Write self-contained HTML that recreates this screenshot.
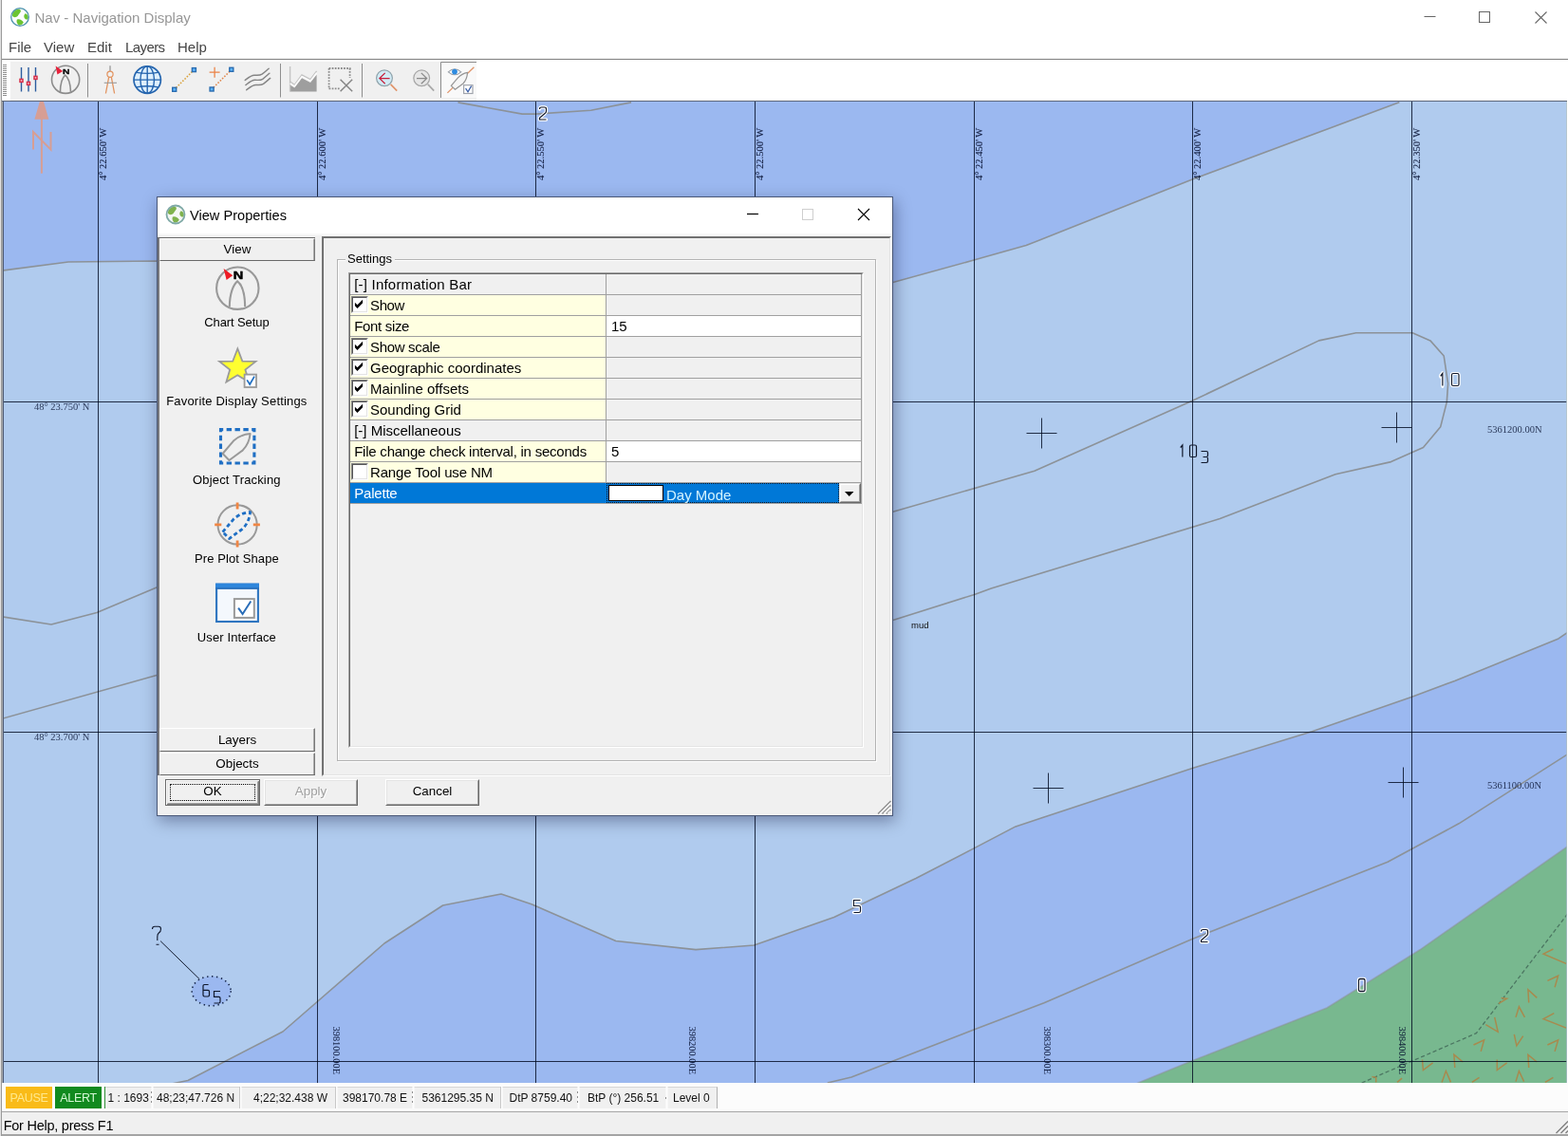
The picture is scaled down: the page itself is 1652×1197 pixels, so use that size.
<!DOCTYPE html>
<html>
<head>
<meta charset="utf-8">
<title>Nav - Navigation Display</title>
<style>
html,body{margin:0;padding:0;}
body{width:1652px;height:1197px;position:relative;overflow:hidden;background:#ffffff;font-family:"Liberation Sans",sans-serif;color:#000;}
.abs{position:absolute;}
.t{position:absolute;white-space:pre;}
/* main window */
#titlebar{left:0;top:0;width:1652px;height:62px;background:#fff;}
#title{left:36.5px;top:8.8px;font-size:15px;line-height:20px;color:#979797;}
.menu{top:39.6px;font-size:15px;line-height:20px;color:#454545;}
#menuline{left:0;top:61px;width:1652px;height:1px;background:#f2f2f2;border-bottom:1px solid #858585;}
#toolbar{left:11px;top:65px;width:491px;height:40.5px;background:#f0f0f0;}
#tbwhite{left:0;top:63px;width:1652px;height:43px;background:#fff;}
.sep{position:absolute;top:67px;width:1px;height:35px;background:#a0a0a0;}
/* status */
#status1{left:0;top:1141px;width:1652px;height:30px;background:#fcfcfc;border-bottom:1px solid #a6a6a6;}
#status1bg{left:111px;top:1145px;width:645px;height:23px;background:#f0f0f0;box-sizing:border-box;border-top:1px solid #d6d6d6;border-right:1px solid #b0b0b0;}
.sp{position:absolute;top:1146px;height:22px;font-size:12px;line-height:22px;color:#111;white-space:pre;text-align:center;}
#status2{left:0;top:1172px;width:1652px;height:25px;background:#f0f0f0;box-sizing:border-box;border-bottom:2px solid #a4a4a4;}
#help{left:3.700px;top:1175.5px;font-size:14.5px;line-height:20px;color:#000;letter-spacing:-0.25px;}
/* dialog */
</style>
</head>
<body>
<div id="root" style="position:absolute;left:0;top:0;width:1652px;height:1197px;will-change:transform">
<!-- TITLE BAR -->
<div class="abs" id="titlebar"></div>
<svg class="abs" style="left:9.8px;top:6.9px;width:22px;height:22px" viewBox="0 0 22 22"><circle cx="11" cy="11" r="9.300" fill="#fdfefe"/><path d="M3 9.500C2.800 5.500 6 2.600 10.200 2.400C12.200 3 12.400 5 11 6.600C9.600 8 9.400 10 7.400 10.800C5.600 11.600 3.600 11 3 9.500Z" fill="#6cc432"/><path d="M16.200 7.600C18 6.800 19.800 9 19.800 11.200C19.800 12.800 18.800 14 17.400 13.400C15.800 12.600 15 11 15.400 9.200Z" fill="#6cc432"/><path d="M7.800 13.800C10 12.600 13.400 14 14.800 16.600C14 18.800 12 20 9.600 19.600C8 18.200 7 15.800 7.800 13.800Z" fill="#6cc432"/><circle cx="11" cy="11" r="9.300" fill="none" stroke="#4d93ad" stroke-width="1.300"/></svg>
<div class="t" id="title">Nav - Navigation Display</div>
<svg class="abs" style="left:1490px;top:0;width:162px;height:40px" viewBox="0 0 162 40">
<path d="M10.5 17.5H22.5" stroke="#666" stroke-width="1" fill="none"/>
<rect x="68.5" y="12.5" width="11" height="11" stroke="#666" stroke-width="1" fill="none"/>
<path d="M127.5 12.5L139.5 24.5M139.5 12.5L127.5 24.5" stroke="#666" stroke-width="1.1" fill="none"/>
</svg>
<!-- MENU -->
<div class="t menu" style="left:9px">File</div>
<div class="t menu" style="left:46px">View</div>
<div class="t menu" style="left:92px">Edit</div>
<div class="t menu" style="left:132px;letter-spacing:-0.6px">Layers</div>
<div class="t menu" style="left:187px">Help</div>
<div class="abs" id="menuline"></div>
<!-- TOOLBAR -->
<div class="abs" id="tbwhite"></div>
<div class="abs" id="toolbar"></div>
<svg class="abs" style="left:0;top:62px;width:510px;height:45px" viewBox="0 62 510 45">
<!-- gripper -->
<path d="M3 68.5H7M3 70.5H7M3 72.5H7M3 74.5H7M3 76.5H7M3 78.5H7M3 80.5H7M3 82.5H7M3 84.5H7M3 86.5H7M3 88.5H7M3 90.5H7M3 92.5H7M3 94.5H7M3 96.5H7M3 98.5H7M3 100.5H7" stroke="#8e8e8e" stroke-width="1" fill="none"/>
<!-- 1 sliders -->
<path d="M22.5 71V96.6M30 71V96.6M37.5 71V96.6" stroke="#2b5c9e" stroke-width="1.400" fill="none"/>
<g fill="#fbd0d8" stroke="#d6304a" stroke-width="1.500"><rect x="21" y="83.400" width="3" height="3"/><rect x="28.500" y="86.400" width="3" height="3"/><rect x="36" y="80.400" width="3" height="3"/></g>
<!-- 2 compass -->
<circle cx="69.1" cy="83.8" r="14.6" fill="none" stroke="#8c8c8c" stroke-width="1.6"/>
<path d="M63.4 97.2C63.6 88 66 81.5 68.7 79.2C71.6 81.5 74.2 88 74.5 96.8" fill="none" stroke="#8c8c8c" stroke-width="1.6"/>
<path d="M58.6 69.6L66.2 74.9L60.4 78.5Z" fill="#e8203a"/>
<text transform="translate(66.1,78.1) scale(1.3,1)" font-family="Liberation Sans,sans-serif" font-weight="bold" font-size="7.900" fill="#000" stroke="#000" stroke-width="0.3">N</text>
<!-- sep -->
<path d="M92.5 67V102.5M295.5 67V102.5M381.5 67V102.5" stroke="#8e8e8e" stroke-width="1" fill="none"/>
<!-- 3 dividers -->
<path d="M116 69.200V75" stroke="#8f8f8f" stroke-width="1.200" fill="none"/>
<circle cx="116" cy="78.300" r="3.100" fill="none" stroke="#e2935f" stroke-width="1.200"/>
<path d="M114.700 81.200L111.400 98.500M117.300 81.200L120.600 98.500" fill="none" stroke="#e2935f" stroke-width="1.300"/>
<path d="M109.700 87.300H123" stroke="#9a9a9a" stroke-width="1.100" fill="none"/>
<!-- 4 globe -->
<circle cx="155.2" cy="84.1" r="14.2" fill="#def0ff" stroke="#2565ae" stroke-width="1.700"/>
<path d="M155.2 70V98.2M141 84.1H169.4" stroke="#2565ae" stroke-width="1.400" fill="none"/>
<ellipse cx="155.2" cy="84.1" rx="7.3" ry="14.2" fill="none" stroke="#2565ae" stroke-width="1.400"/>
<path d="M143.8 76.3Q155.2 78.6 166.6 76.3M143.8 91.9Q155.2 89.6 166.6 91.9" stroke="#2565ae" stroke-width="1.300" fill="none"/>
<!-- 5 line -->
<path d="M185.5 92.5L202.6 75.4" stroke="#d9a441" stroke-width="1.6" stroke-dasharray="1.6 1.6" fill="none"/>
<g fill="#5eb6ff" stroke="#2a6cb0" stroke-width="1.400"><rect x="181.700" y="92.300" width="4" height="4"/><rect x="202.400" y="71.600" width="4" height="4"/></g>
<!-- 6 plus line -->
<path d="M225 92.2L242 75.2" stroke="#e08a50" stroke-width="1.6" stroke-dasharray="1.6 1.6" fill="none"/>
<g fill="#5eb6ff" stroke="#2a6cb0" stroke-width="1.400"><rect x="221.100" y="92" width="4" height="4"/><rect x="241.800" y="71.300" width="4" height="4"/></g>
<path d="M220.6 76.2H231.6M226.1 70.7V81.7" stroke="#ea8246" stroke-width="1.250" fill="none"/>
<!-- 7 waves -->
<g fill="none" stroke="#858585" stroke-width="1.450" stroke-linecap="round" stroke-linejoin="round"><path d="M258.2 84.5C262 81.5 264.5 79.2 268 79.2C271 79.2 273.5 79.8 276 78.2C279 76 281 74 283.2 72.2"/><path d="M258.9 89.6C262.7 86.6 265.2 84.3 268.7 84.3C271.7 84.3 274.2 84.9 276.7 83.3C279.7 81.1 281.7 79.1 283.9 77.3"/><path d="M259.7 94.7C263.5 91.7 266 89.4 269.5 89.4C272.5 89.4 275 90 277.5 88.4C280.5 86.2 282.5 84.2 284.7 82.4"/></g>
<!-- 8 area chart -->
<path d="M305.6 89.6L310.3 92.5L318 82.3L327 87.1L333.6 78.7V96.5H305.6Z" fill="#9e9e9e"/>
<path d="M305.6 70V96.5" stroke="#c4c4c4" stroke-width="1.4" fill="none"/>
<path d="M305.6 86L310.3 89.4L318 79L327 83.7L333.6 74.8" stroke="#c4c4c4" stroke-width="1.4" fill="none"/>
<path d="M305.6 87.8L310.3 91L318 80.7L327 85.4L333.6 76.8" stroke="#fbfbfb" stroke-width="1.5" fill="none"/>
<!-- 9 dotted rect + X -->
<path d="M346.6 72H369.4" stroke="#8a8a8a" stroke-width="1.8" stroke-dasharray="1.7 1.4" fill="none"/>
<path d="M346.6 72V94" stroke="#8a8a8a" stroke-width="1.8" stroke-dasharray="1.7 1.4" fill="none"/>
<path d="M346.6 93.4H358" stroke="#8a8a8a" stroke-width="1.8" stroke-dasharray="1.7 1.4" fill="none"/>
<path d="M368.6 72V82" stroke="#8a8a8a" stroke-width="1.8" stroke-dasharray="1.7 1.4" fill="none"/>
<path d="M358.6 83.8L371.2 96.2M371.2 83.8L358.6 96.2" stroke="#858585" stroke-width="1.5" fill="none"/>
<!-- 10 zoom prev -->
<path d="M411.6 88.9L418.2 95.6" stroke="#e0956a" stroke-width="1.7" fill="none"/>
<circle cx="405" cy="82.3" r="8.4" fill="#d2ebf5" stroke="#8fa3ab" stroke-width="1.200"/>
<path d="M400.3 82.6H410.6M405.7 76.9L399.9 82.6L405.7 88.2" stroke="#c8203c" stroke-width="1.300" fill="none"/>
<!-- 11 zoom next -->
<path d="M450.8 88.9L457.2 95.6" stroke="#a8a8a8" stroke-width="1.7" fill="none"/>
<circle cx="444.2" cy="82.3" r="8.4" fill="#e6e6e6" stroke="#a6a6a6" stroke-width="1.200"/>
<path d="M439 82.6H449.3M443.8 76.9L449.6 82.6L443.8 88.2" stroke="#8a8a8a" stroke-width="1.300" fill="none"/>
<!-- 12 checked button -->
<rect x="464.5" y="65.5" width="37.5" height="37.5" fill="#f9f9f9"/>
<path d="M464.5 103V65.5H502" stroke="#8c8c8c" stroke-width="1" fill="none"/>
<path d="M471.4 97.9L499.4 70.7" stroke="#e0956a" stroke-width="1.3" fill="none"/>
<path d="M475.3 90.400L482.300 82.200Q486.700 77.400 492.500 76.300Q492.200 83.500 488 88L479.500 94.300Z" fill="#f6f6f6" stroke="#969696" stroke-width="1.250" stroke-linejoin="round"/>
<path d="M472.3 75.8Q479 69.8 485.8 75.8Q479 81.8 472.3 75.8Z" fill="#fdfdfd" stroke="#9aa0a8" stroke-width="1.1"/>
<circle cx="479" cy="75.6" r="2.9" fill="#2e8be0"/>
<rect x="488.6" y="89.7" width="9.4" height="8.8" fill="#fff" stroke="#a0a4ac" stroke-width="1.2"/>
<path d="M490.6 93.2L493 96.8L496.6 90.6" stroke="#3a5fa8" stroke-width="1.250" fill="none"/>
</svg>

<!-- MAP -->
<svg class="abs" style="left:0;top:0;width:1652px;height:1197px" viewBox="0 0 1652 1197">
<defs><clipPath id="mc"><rect x="3" y="107" width="1647.5" height="34.5"/></clipPath>
<clipPath id="mapclip"><rect x="4" y="107" width="1646.5" height="1034"/></clipPath>
<path id="d0" d="M1.5 0H5.5Q7 0 7 1.5V11.5Q7 13 5.5 13H1.5Q0 13 0 11.5V1.5Q0 0 1.5 0Z"/>
<path id="d1" d="M1 2.8L4 0V13"/>
<path id="d2" d="M0 2Q0 0 2 0H5Q7 0 7 2V4Q7 5.6 5.6 6.6L0 11.2V13H7"/>
<path id="d3" d="M0 0H5.5Q7 0 7 1.5V5Q7 6.5 5.5 6.5H2M5.5 6.5Q7 6.5 7 8V11.5Q7 13 5.5 13H0"/>
<path id="d5" d="M7 0H0V6H5.5Q7 6 7 7.5V11.5Q7 13 5.5 13H0"/>
<path id="d6" d="M6 0H1.5Q0 0 0 1.5V11.5Q0 13 1.5 13H5.5Q7 13 7 11.5V7.5Q7 6 5.5 6H0"/>
</defs>
<rect x="2" y="106" width="1649" height="1035" fill="#ffffff"/>
<g clip-path="url(#mapclip)">
<rect x="3" y="107" width="1648" height="1035" fill="#b0cbee"/>
<polygon points="3,107 3,285 72,276 165,275 940,297.7 1026.9,273.8 1081.2,258.6 1256.2,189 1474.3,107.8 1474.3,107" fill="#9bb8f0"/>
<polygon points="182,1141.7 198,1138.5 298,1087 405,994 466.6,954 528,942 560,952.8 648.8,991.5 733,1000.6 794.4,996 878.7,966.5 965,925.5 1026.6,893.6 1070,870.9 1100,861 1256.2,809.5 1382.4,770.8 1487,734.4 1532.7,717.5 1642,672.9 1652,666 1652,1142 182,1142" fill="#9bb8f0"/>
<polygon points="1198,1141.5 1256,1117.8 1398,1062 1496,1000.8 1652,891.5 1652,1142 1198,1142" fill="#78b88f"/>
<polyline points="3,285 72,276 165,275 940,297.7 1026.9,273.8 1081.2,258.6 1256.2,189 1474.3,107.8" fill="none" stroke="#8c9298" stroke-width="1.6" stroke-linejoin="round" />
<polyline points="182,1141.7 198,1138.5 298,1087 405,994 466.6,954 528,942 560,952.8 648.8,991.5 733,1000.6 794.4,996 878.7,966.5 965,925.5 1026.6,893.6 1070,870.9 1100,861 1256.2,809.5 1382.4,770.8 1487,734.4 1532.7,717.5 1642,672.9 1652,666" fill="none" stroke="#8c9298" stroke-width="1.6" stroke-linejoin="round" />
<polyline points="1198,1141.5 1256,1117.8 1398,1062 1496,1000.8 1652,891.5" fill="none" stroke="#8c9298" stroke-width="1.6" stroke-linejoin="round" stroke-opacity="0.55"/>
<polyline points="482.5,107.9 550.2,120.1 564.3,120.1 622.6,116.2 665,107.9" fill="none" stroke="#8c9298" stroke-width="1.6" stroke-linejoin="round" />
<polyline points="3,650 54,658 102,645.5 165,619 940,539.6 1089.9,496.2 1256.2,422.3 1389.6,358.9 1428.7,350.7 1488.2,350.7 1506.9,358.9 1521.2,375 1525.6,404.1 1524.3,423.6 1517.7,449.7 1499.5,471.4 1465.6,486.6 1407,499.7 1285.3,546.6 1044.3,620 1026.6,626.4 940,653.7 165,711.5 3,757" fill="none" stroke="#8c9298" stroke-width="1.6" stroke-linejoin="round" />
<polyline points="871.8,1141 897,1135 1026.6,1084.8 1100,1056.8 1256,989.4 1462,908.3 1537,867.8 1652,794.5" fill="none" stroke="#8c9298" stroke-width="1.6" stroke-linejoin="round" />
<polyline points="1434.7,1141 1555.4,1088.7 1648.8,966.6 1652,962" fill="none" stroke="#4c7762" stroke-width="1.300" stroke-dasharray="4.200 2.600"/>
<polyline points="1636.4,1000.0 1626.1,1005.1 1650.1,1015.4" fill="none" stroke="#a88a4e" stroke-width="1.500"/>
<polyline points="1630.4,1033.4 1641.6,1028.2 1638.1,1040.2" fill="none" stroke="#a88a4e" stroke-width="1.500"/>
<polyline points="1610.7,1056.5 1609.9,1042.8 1619.3,1051.4" fill="none" stroke="#a88a4e" stroke-width="1.500"/>
<polyline points="1597.0,1071.9 1600.4,1060.8 1606.4,1071.9" fill="none" stroke="#a88a4e" stroke-width="1.500"/>
<polyline points="1637.3,1067.6 1626.1,1073.6 1650.1,1083.1" fill="none" stroke="#a88a4e" stroke-width="1.500"/>
<polyline points="1565.3,1079.6 1578.2,1087.3 1574.7,1071.9" fill="none" stroke="#a88a4e" stroke-width="1.500"/>
<polyline points="1595.3,1089.9 1597.9,1101.9 1604.7,1091.6" fill="none" stroke="#a88a4e" stroke-width="1.500"/>
<polyline points="1552.5,1101.0 1563.6,1095.9 1560.2,1107.9" fill="none" stroke="#a88a4e" stroke-width="1.500"/>
<polyline points="1630.4,1101.0 1641.6,1095.9 1638.1,1107.9" fill="none" stroke="#a88a4e" stroke-width="1.500"/>
<polyline points="1532.8,1125.0 1531.9,1111.3 1541.3,1119.0" fill="none" stroke="#a88a4e" stroke-width="1.500"/>
<polyline points="1498.5,1116.5 1499.4,1127.6 1509.6,1119.9" fill="none" stroke="#a88a4e" stroke-width="1.500"/>
<polyline points="1577.3,1116.5 1577.3,1127.6 1587.6,1119.9" fill="none" stroke="#a88a4e" stroke-width="1.500"/>
<polyline points="1610.7,1125.0 1609.9,1111.3 1619.3,1119.0" fill="none" stroke="#a88a4e" stroke-width="1.500"/>
<polyline points="1519.1,1140.4 1523.4,1128.5 1528.5,1140.4" fill="none" stroke="#a88a4e" stroke-width="1.500"/>
<polyline points="1597.0,1139.6 1600.4,1128.5 1605.6,1139.6" fill="none" stroke="#a88a4e" stroke-width="1.500"/>
<polyline points="1550.8,1140.4 1558.5,1135.3" fill="none" stroke="#a88a4e" stroke-width="1.500"/>
<polyline points="1627.9,1140.4 1636.4,1135.3" fill="none" stroke="#a88a4e" stroke-width="1.500"/>
<polyline points="1445.4,1134.4 1449.7,1135.3 1449.7,1140.4" fill="none" stroke="#a88a4e" stroke-width="1.500"/>
<polyline points="1472.0,1140.4 1477.1,1136.2" fill="none" stroke="#a88a4e" stroke-width="1.500"/>
<polyline points="1579.0,1057.4 1587.6,1052.2 1581.6,1051.4" fill="none" stroke="#a88a4e" stroke-width="1.500"/>
<line x1="103.5" y1="107" x2="103.5" y2="1142" stroke="rgba(0,10,32,0.82)" stroke-width="1"/>
<line x1="334.5" y1="107" x2="334.5" y2="1142" stroke="rgba(0,10,32,0.82)" stroke-width="1"/>
<line x1="564.5" y1="107" x2="564.5" y2="1142" stroke="rgba(0,10,32,0.82)" stroke-width="1"/>
<line x1="795.5" y1="107" x2="795.5" y2="1142" stroke="rgba(0,10,32,0.82)" stroke-width="1"/>
<line x1="1026.5" y1="107" x2="1026.5" y2="1142" stroke="rgba(0,10,32,0.82)" stroke-width="1"/>
<line x1="1256.5" y1="107" x2="1256.5" y2="1142" stroke="rgba(0,10,32,0.82)" stroke-width="1"/>
<line x1="1487.5" y1="107" x2="1487.5" y2="1142" stroke="rgba(0,10,32,0.82)" stroke-width="1"/>
<line x1="3" y1="423.5" x2="1651" y2="423.5" stroke="rgba(0,10,32,0.82)" stroke-width="1"/>
<line x1="3" y1="771.5" x2="1651" y2="771.5" stroke="rgba(0,10,32,0.82)" stroke-width="1"/>
<line x1="3" y1="1118.5" x2="1651" y2="1118.5" stroke="rgba(0,10,32,0.82)" stroke-width="1"/>
<path d="M1081.5 456.5H1113.5M1097.5 440.5V472.5" stroke="rgba(0,10,32,0.82)" stroke-width="1" fill="none"/>
<path d="M1455.5 450.5H1487.5M1471.5 434.5V466.5" stroke="rgba(0,10,32,0.82)" stroke-width="1" fill="none"/>
<path d="M1088.5 830.5H1120.5M1104.5 814.5V846.5" stroke="rgba(0,10,32,0.82)" stroke-width="1" fill="none"/>
<path d="M1462.5 824.5H1494.5M1478.5 808.5V840.5" stroke="rgba(0,10,32,0.82)" stroke-width="1" fill="none"/>
<g font-family="Liberation Serif, serif" font-size="10.5" fill="rgba(0,12,44,0.86)" stroke="rgba(0,12,44,0.86)" stroke-width="0.1">
<text transform="translate(112.0,190) rotate(-90)">4° 22.650' W</text>
<text transform="translate(343.0,190) rotate(-90)">4° 22.600' W</text>
<text transform="translate(573.0,190) rotate(-90)">4° 22.550' W</text>
<text transform="translate(804.0,190) rotate(-90)">4° 22.500' W</text>
<text transform="translate(1035.0,190) rotate(-90)">4° 22.450' W</text>
<text transform="translate(1265.0,190) rotate(-90)">4° 22.400' W</text>
<text transform="translate(1496.0,190) rotate(-90)">4° 22.350' W</text>
</g>
<g font-family="Liberation Serif, serif" font-size="10.4" fill="rgba(0,12,44,0.86)" stroke="rgba(0,12,44,0.86)" stroke-width="0.05">
<text transform="translate(351.2,1081.5) rotate(90)">398100.00E</text>
<text transform="translate(726.2,1081.5) rotate(90)">398200.00E</text>
<text transform="translate(1100.2,1081.5) rotate(90)">398300.00E</text>
<text transform="translate(1474.2,1081.5) rotate(90)">398400.00E</text>
</g>
<g font-family="Liberation Serif, serif" font-size="10.5" fill="rgba(0,12,44,0.78)">
<text x="36" y="432">48° 23.750' N</text>
<text x="36" y="780">48° 23.700' N</text>
<text x="1567" y="456">5361200.00N</text>
<text x="1567" y="831">5361100.00N</text>
</g>
<text x="960" y="661.5" font-family="Liberation Sans,sans-serif" font-size="9.5" fill="#111">mud</text>
<use href="#d2" transform="translate(568.5,113) scale(1.0,1.0)" fill="none" stroke="#fff" stroke-width="3.4" stroke-linejoin="round" stroke-linecap="round"/><use href="#d2" transform="translate(568.5,113) scale(1.0,1.0)" fill="none" stroke="#10182c" stroke-width="1.2"/>
<use href="#d1" transform="translate(1517,393.5) scale(0.7142857142857143,1.0)" fill="none" stroke="#fff" stroke-width="4.76" stroke-linejoin="round" stroke-linecap="round"/><use href="#d1" transform="translate(1517,393.5) scale(0.7142857142857143,1.0)" fill="none" stroke="#10182c" stroke-width="1.68"/>
<use href="#d0" transform="translate(1529.5,393.5) scale(1.0714285714285714,1.0)" fill="none" stroke="#fff" stroke-width="3.1733333333333333" stroke-linejoin="round" stroke-linecap="round"/><use href="#d0" transform="translate(1529.5,393.5) scale(1.0714285714285714,1.0)" fill="none" stroke="#10182c" stroke-width="1.1199999999999999"/>
<use href="#d5" transform="translate(899.5,948.5) scale(1.0,1.0)" fill="none" stroke="#fff" stroke-width="3.4" stroke-linejoin="round" stroke-linecap="round"/><use href="#d5" transform="translate(899.5,948.5) scale(1.0,1.0)" fill="none" stroke="#10182c" stroke-width="1.2"/>
<use href="#d2" transform="translate(1265.5,979.5) scale(1.0,1.0)" fill="none" stroke="#fff" stroke-width="3.4" stroke-linejoin="round" stroke-linecap="round"/><use href="#d2" transform="translate(1265.5,979.5) scale(1.0,1.0)" fill="none" stroke="#10182c" stroke-width="1.2"/>
<use href="#d0" transform="translate(1431.5,1031.5) scale(0.9285714285714286,1.0)" fill="none" stroke="#fff" stroke-width="3.6615384615384614" stroke-linejoin="round" stroke-linecap="round"/><use href="#d0" transform="translate(1431.5,1031.5) scale(0.9285714285714286,1.0)" fill="none" stroke="#10182c" stroke-width="1.2923076923076922"/>
<use href="#d1" transform="translate(1243,469) scale(0.7142857142857143,0.9615384615384616)" fill="none" stroke="#10182c" stroke-width="1.68"/>
<use href="#d0" transform="translate(1253.5,469) scale(1.0,0.9615384615384616)" fill="none" stroke="#10182c" stroke-width="1.2"/>
<use href="#d3" transform="translate(1265.5,475.5) scale(1.0,0.9230769230769231)" fill="none" stroke="#10182c" stroke-width="1.2"/>
<ellipse cx="222.7" cy="1044.3" rx="20.5" ry="15.5" fill="#9bb8f0" stroke="#16264a" stroke-width="1.6" stroke-dasharray="1.4 3.6"/>
<use href="#d6" transform="translate(214,1037.5) scale(0.9285714285714286,0.9615384615384616)" fill="none" stroke="#10182c" stroke-width="1.2923076923076922"/>
<use href="#d5" transform="translate(225.5,1044.5) scale(0.9285714285714286,0.9615384615384616)" fill="none" stroke="#10182c" stroke-width="1.2923076923076922"/>
<path d="M169.1 991.6L210.2 1031.7" stroke="#10182c" stroke-width="1" fill="none"/>
<path d="M160.5 979Q160.5 976.3 163 976.3H167Q169.5 976.3 169.5 979Q169.5 981.5 167.3 983Q165.8 984.2 165.8 987V991M164.5 995.3H167.5" stroke="#10182c" stroke-width="1.1" fill="none"/>
<g opacity="0.85"><path d="M43.9 100L36.4 125.7H51.4Z" fill="#e29a84"/><path d="M43.9 120V182.7" stroke="#e29a84" stroke-width="2" fill="none"/><path d="M35 157.6V139L53.5 157.6V139" stroke="#e29a84" stroke-width="2" fill="none"/></g>
</g>
<rect x="2" y="106" width="1649" height="1" fill="#5d6679"/><rect x="2" y="107" width="1" height="1034" fill="#a4a8ac"/><rect x="3" y="107" width="1" height="1034" fill="#4e5a74"/><rect x="1650" y="107" width="1" height="1034" fill="#9fb0b4" fill-opacity="0.6"/>
</svg>
<!-- STATUS -->
<div class="abs" id="status1"></div>
<div class="abs" id="status1bg"></div>
<div class="abs" style="left:6px;top:1145px;width:49px;height:23px;background:#f9bb18"></div>
<div class="sp" style="left:6px;width:49px;color:#ffe88c;top:1146px;line-height:23px;font-size:12.5px;letter-spacing:-0.3px">PAUSE</div>
<div class="abs" style="left:58px;top:1145px;width:49px;height:23px;background:#118a1f"></div>
<div class="sp" style="left:58px;width:49px;color:#d4f8d4;top:1146px;line-height:23px;font-size:12.5px;letter-spacing:-0.3px">ALERT</div>
<div class="abs" style="left:110px;top:1145px;width:1px;height:23px;background:#2f8f35"></div>
<div class="sp" style="left:113.5px">1 : 1693</div>
<div class="sp" style="left:165px">48;23;47.726 N</div>
<div class="sp" style="left:267px">4;22;32.438 W</div>
<div class="sp" style="left:361px">398170.78 E</div>
<div class="sp" style="left:444.5px">5361295.35 N</div>
<div class="sp" style="left:536.5px">DtP 8759.40</div>
<div class="sp" style="left:619px">BtP (°) 256.51</div>
<div class="sp" style="left:709px">Level 0</div>
<svg class="abs" style="left:0;top:1141px;width:760px;height:31px" viewBox="0 1141 760 31">
<path d="M160.5 1145V1168M253.5 1145V1168M354.5 1145V1168M435.5 1145V1168M528.5 1145V1168M609.5 1145V1168M702.5 1145V1168" stroke="#fdfdfd" stroke-width="2" fill="none"/>
<path d="M159.5 1150V1152M159.5 1155V1157M159.5 1160V1162M434.5 1150V1152M434.5 1155V1157M434.5 1160V1162M608.5 1150V1152M608.5 1155V1157M608.5 1160V1162M701.5 1156V1158" stroke="#909090" stroke-width="1" fill="none"/>
<path d="M252.5 1145V1168M353.5 1145V1168M527.5 1145V1168" stroke="#c8c8c8" stroke-width="1" fill="none"/>
</svg>

<div class="abs" id="status2"></div>
<div class="t" id="help">For Help, press F1</div>
<div class="abs" id="wborder" style="left:0;top:0;width:1px;height:1197px;background:#e2e2e2;border-right:1px solid #9a9a9a"></div>
<svg class="abs" style="left:1636px;top:1178px;width:16px;height:17px" viewBox="0 0 16 17"><path d="M3.500 16L16 3.500M8.500 16L16 8.500M13.500 16L16 13.500" stroke="#7e7e7e" stroke-width="1.300" fill="none"/></svg>
<!-- DIALOG -->
<style>
#dlg{left:165px;top:207px;width:776px;height:653px;background:#f0f0f0;border:1px solid #4a5878;box-sizing:border-box;box-shadow:2px 5px 16px 0 rgba(0,0,40,.36);}
#dlg .t{position:absolute;white-space:pre;}
#dtitlebar{left:0;top:0;width:774px;height:38px;background:#fff;border-bottom:2px solid #f8f8f8;}
#dtitle{left:34px;top:8.6px;font-size:14.6px;line-height:20px;color:#000;}
#lpanel{left:0;top:42px;width:166px;height:567px;box-sizing:border-box;border-top:1px solid #696969;border-left:2px solid #77777c;}
.obtn{position:absolute;left:2px;width:164px;height:24px;box-sizing:border-box;background:#f0f0f0;border:1px solid;border-color:#fff #7a7a7a #696969 #fff;box-shadow:inset -1px 0 0 #a8a8a8;font-size:13.4px;line-height:22px;text-align:center;color:#000;}
.olbl{position:absolute;left:0.4px;width:166px;text-align:center;font-size:13px;line-height:16px;color:#000;white-space:pre;}
#rpanel{left:173px;top:41px;width:600px;height:569px;box-sizing:border-box;border:1px solid;border-color:#7a7a7a #fff #fff #7a7a7a;}
#rpanel2{left:174px;top:42px;width:598px;height:567px;box-sizing:border-box;border:1px solid;border-color:#696969 #e3e3e3 #e3e3e3 #696969;}
#gbox{left:189px;top:65px;width:568px;height:529px;box-sizing:border-box;border:1px solid #b4b4b4;box-shadow:1px 1px 0 #fff, inset 1px 1px 0 #fff;}
#gboxlbl{left:198px;top:56.500px;padding:0 3px 0 2px;background:#f0f0f0;font-size:13px;line-height:16px;}
#grid{left:201px;top:79px;width:543px;height:501px;box-sizing:border-box;background:#f0f0f0;border:1px solid;border-color:#a0a0a0 #fff #fff #a0a0a0;}
#grid2{left:202px;top:80px;width:541px;height:499px;box-sizing:border-box;border:1px solid;border-color:#696969 #e3e3e3 #e3e3e3 #696969;}
.row{position:absolute;left:203px;width:539px;height:22px;box-sizing:border-box;border-bottom:1px solid #a0a0a0;border-right:1px solid #a0a0a0;}
.row .l{position:absolute;left:0;top:0;width:269px;height:21px;border-right:1px solid #a0a0a0;background:#ffffe1;font-size:15px;line-height:21px;white-space:pre;overflow:hidden;}
.row .r{position:absolute;left:270px;top:0;width:268px;height:21px;background:#f0f0f0;font-size:15px;line-height:21px;white-space:pre;}
.row.hdr .l{background:#f0f0f0;}
.row .l span.tx{position:absolute;left:4.2px;top:0;}
.row .l span.tc{position:absolute;left:21px;top:0;}
.row .r span.tx{position:absolute;left:5px;top:0;}
.row .r.w{background:#fff;}
.cb{position:absolute;left:1px;top:1px;width:18px;height:18px;box-sizing:border-box;background:#fff;border:1px solid;border-color:#808080 #fff #fff #808080;}
.cb i{position:absolute;left:0;top:0;width:16px;height:16px;box-sizing:border-box;border:1px solid;border-color:#5a5a5a #e3e3e3 #e3e3e3 #5a5a5a;}
.cb svg{position:absolute;left:0;top:0;width:16px;height:16px;}
.btn{position:absolute;top:613px;height:28px;width:99px;box-sizing:border-box;background:#f0f0f0;border:1px solid;border-color:#fff #696969 #696969 #fff;font-size:13.4px;line-height:24px;text-align:center;color:#000;}
.btn i{position:absolute;left:0;top:0;right:0;bottom:0;border:1px solid;border-color:#e3e3e3 #a0a0a0 #a0a0a0 #e3e3e3;}
</style>
<div class="abs" id="dlg">
<div class="abs" id="dtitlebar"></div>
<svg class="abs" style="left:8px;top:6.9px;width:22px;height:22px" viewBox="0 0 22 22"><circle cx="11" cy="11" r="9.500" fill="#f4f7f5"/><path d="M3 9.500C2.800 5.500 6 2.600 10.200 2.400C12.200 3 12.400 5 11 6.600C9.600 8 9.400 10 7.400 10.800C5.600 11.600 3.600 11 3 9.500Z" fill="#7fb24e"/><path d="M16.200 7.600C18 6.800 19.800 9 19.800 11.200C19.800 12.800 18.800 14 17.400 13.400C15.800 12.600 15 11 15.400 9.200Z" fill="#7fb24e"/><path d="M7.800 13.800C10 12.600 13.400 14 14.800 16.600C14 18.800 12 20 9.600 19.600C8 18.200 7 15.800 7.800 13.800Z" fill="#7fb24e"/><circle cx="11" cy="11" r="9.500" fill="none" stroke="#7fa9a6" stroke-width="1.800"/></svg>
<div class="t" id="dtitle">View Properties</div>
<svg class="abs" style="left:610px;top:0;width:160px;height:40px" viewBox="0 0 160 40">
<path d="M11 17.500H23" stroke="#000" stroke-width="1.2" fill="none"/>
<rect x="69.5" y="12.5" width="11" height="11" stroke="#cfcfcf" stroke-width="1" fill="none"/>
<path d="M128 12L140 24M140 12L128 24" stroke="#000" stroke-width="1.1" fill="none"/>
</svg>
<!-- left outlook bar -->
<div class="abs" id="lpanel"></div>
<div class="obtn" style="top:43px">View</div>
<div class="obtn" style="top:559px;height:25px;line-height:24px">Layers</div>
<div class="obtn" style="top:585px">Objects</div>
<svg class="abs" style="left:0;top:60px;width:170px;height:400px" viewBox="166 268 170 400">
<circle cx="250.3" cy="303.7" r="22.2" fill="none" stroke="#999" stroke-width="2.1"/>
<path d="M241.8 323.4C242 309 246 299.6 250.1 296.4C254.4 299.6 258 309 258.2 323.2" fill="none" stroke="#999" stroke-width="2.1"/>
<path d="M235.6 283L245.2 290.2L238.6 295Z" fill="#ee1c25"/>
<text transform="translate(245.7,294.4) scale(1.28,1)" font-family="Liberation Sans,sans-serif" font-weight="bold" font-size="11.4" fill="#000" stroke="#000" stroke-width="0.45">N</text>
<path d="M250.3 367.400L255.4 380.7L269.4 380.9L258.4 389.6L262.6 403L250.3 395.2L238.4 402.6L242.2 389.6L231.2 380.9L245.2 380.7Z" fill="#ffff30" stroke="#9a9a9a" stroke-width="1.8" stroke-linejoin="miter"/>
<rect x="257.6" y="394.6" width="12.4" height="13.4" fill="#fff" stroke="#9a9a9a" stroke-width="1.8"/>
<path d="M260.2 400.4L263.200 405L268 396.6" stroke="#1e6ec2" stroke-width="1.7" fill="none"/>
<rect x="232.5" y="452.600" width="35.4" height="35.4" fill="none" stroke="#1f6fc4" stroke-width="3.1" stroke-dasharray="5.4 3.45" stroke-dashoffset="2.7"/>
<path d="M234.6 478L246 464.6Q253.200 457.800 263.600 457Q262.600 467.600 255.600 474.600L241.500 485Z" fill="none" stroke="#999" stroke-width="2" stroke-linejoin="round"/>
<circle cx="250.1" cy="552.9" r="20.6" fill="none" stroke="#999" stroke-width="2"/>
<path d="M250.1 529.5V536.5M250.1 569.6V576.6M226.200 552.900H233.300M266.800 552.900H273.900" stroke="#f08644" stroke-width="2.800" fill="none"/>
<path d="M234.6 560.6L246 547.2Q253.200 540.400 263.600 539.600Q262.600 550.200 255.600 557.200L241.500 567.600Z" fill="none" stroke="#1f6fc4" stroke-width="2.800" stroke-dasharray="4.200 2.900" stroke-linejoin="round"/>
<rect x="228.1" y="615.7" width="43.8" height="39.3" fill="#f4f8fd" stroke="#2e75c0" stroke-width="2.1"/>
<rect x="227.1" y="614.7" width="45.8" height="6" fill="#2e86dc"/>
<path d="M227.1 620H272.9" stroke="#2a6cb6" stroke-width="1.6"/>
<rect x="246.900" y="631.1" width="20.9" height="19.8" fill="#fff" stroke="#9a9a9a" stroke-width="2"/>
<path d="M251.1 640.6L255.6 647L264.3 633.5" stroke="#2a6db8" stroke-width="2" fill="none"/>
</svg>

<div class="olbl" style="top:124px;letter-spacing:-0.1px">Chart Setup</div>
<div class="olbl" style="top:207px;letter-spacing:0.18px">Favorite Display Settings</div>
<div class="olbl" style="top:290px;letter-spacing:0.15px">Object Tracking</div>
<div class="olbl" style="top:373px;letter-spacing:0.1px">Pre Plot Shape</div>
<div class="olbl" style="top:456px;letter-spacing:0.1px">User Interface</div>
<!-- right panel -->
<div class="abs" id="rpanel"></div><div class="abs" id="rpanel2"></div>
<div class="abs" id="gbox"></div>
<div class="t" id="gboxlbl">Settings</div>
<div class="abs" id="grid"></div><div class="abs" id="grid2"></div>
<div class="row hdr" style="top:81px"><div class="l"><span class="tx" style="letter-spacing:0.21px">[-] Information Bar</span></div><div class="r"></div></div>
<div class="row" style="top:103px"><div class="l"><div class="cb"><i></i><svg viewBox="0 0 16 16"><path d="M2.900 5.700L5.500 8.300L11.100 2.700V6.300L5.500 11.900L2.900 9.300Z" fill="#000"/></svg></div><span class="tc" style="letter-spacing:-0.37px">Show</span></div><div class="r"></div></div>
<div class="row" style="top:125px"><div class="l"><span class="tx" style="letter-spacing:-0.33px">Font size</span></div><div class="r w"><span class="tx">15</span></div></div>
<div class="row" style="top:147px"><div class="l"><div class="cb"><i></i><svg viewBox="0 0 16 16"><path d="M2.900 5.700L5.500 8.300L11.100 2.700V6.300L5.500 11.900L2.900 9.300Z" fill="#000"/></svg></div><span class="tc" style="letter-spacing:-0.33px">Show scale</span></div><div class="r"></div></div>
<div class="row" style="top:169px"><div class="l"><div class="cb"><i></i><svg viewBox="0 0 16 16"><path d="M2.900 5.700L5.500 8.300L11.100 2.700V6.300L5.500 11.900L2.900 9.300Z" fill="#000"/></svg></div><span class="tc">Geographic coordinates</span></div><div class="r"></div></div>
<div class="row" style="top:191px"><div class="l"><div class="cb"><i></i><svg viewBox="0 0 16 16"><path d="M2.900 5.700L5.500 8.300L11.100 2.700V6.300L5.500 11.900L2.900 9.300Z" fill="#000"/></svg></div><span class="tc">Mainline offsets</span></div><div class="r"></div></div>
<div class="row" style="top:213px"><div class="l"><div class="cb"><i></i><svg viewBox="0 0 16 16"><path d="M2.900 5.700L5.500 8.300L11.100 2.700V6.300L5.500 11.900L2.900 9.300Z" fill="#000"/></svg></div><span class="tc">Sounding Grid</span></div><div class="r"></div></div>
<div class="row hdr" style="top:235px"><div class="l"><span class="tx">[-] Miscellaneous</span></div><div class="r"></div></div>
<div class="row" style="top:257px"><div class="l"><span class="tx" style="letter-spacing:-0.23px">File change check interval, in seconds</span></div><div class="r w"><span class="tx">5</span></div></div>
<div class="row" style="top:279px"><div class="l"><div class="cb"><i></i></div><span class="tc" style="letter-spacing:-0.15px">Range Tool use NM</span></div><div class="r"></div></div>
<div class="row" style="top:301px"><div class="l" style="background:#0078d7;color:#fff;border-right-color:#0078d7"><span class="tx" style="letter-spacing:-0.2px">Palette</span></div><div class="r" style="background:#0078d7;color:#d4f3ff;outline:1px dotted #0c1422;outline-offset:-1px;width:245px"><div style="position:absolute;left:2px;top:2px;width:56px;height:15px;background:#fff;border:1px solid #000"></div><span class="tx" style="left:63px;top:2px">Day Mode</span></div>
<div style="position:absolute;left:515px;top:0;width:23px;height:21px;box-sizing:border-box;background:#f0f0f0;border:1px solid;border-color:#e3e3e3 #696969 #696969 #e3e3e3;"><i style="position:absolute;left:0;top:0;right:0;bottom:0;border:1px solid;border-color:#fff #a0a0a0 #a0a0a0 #fff"></i><svg style="position:absolute;left:5.2px;top:7.800px;width:9.500px;height:5px" viewBox="0 0 9 5" preserveAspectRatio="none"><path d="M0 0H9L4.5 5Z" fill="#000"/></svg></div></div>
<!-- buttons -->
<div class="btn" style="left:8px;width:100px;border-color:#6c6c6c;box-shadow:inset 1px 1px 0 #fff, inset -1px -1px 0 #7e7e7e;"><i style="left:1px;top:1px;right:1px;bottom:1px"></i><div style="position:absolute;left:4px;top:4px;right:4px;bottom:4px;border:1px dotted #000"></div>OK</div>
<div class="btn" style="left:112px;color:#a0a0a0;text-shadow:1px 1px 0 #fff"><i></i>Apply</div>
<div class="btn" style="left:240px"><i></i>Cancel</div>
<!-- grip -->
<svg class="abs" style="left:757px;top:634px;width:16px;height:16px" viewBox="0 0 16 16"><path d="M15.5 2L2 15.500M15.500 6.500L6.500 15.500M15.500 11L11 15.500" stroke="#8e8e8e" stroke-width="1.400" fill="none"/><path d="M15 4.2L4.2 15M15 8.2L8.2 15M15 12.2L12.2 15" stroke="#fff" stroke-width="1" fill="none"/></svg>
</div>

</div>
</body>
</html>
